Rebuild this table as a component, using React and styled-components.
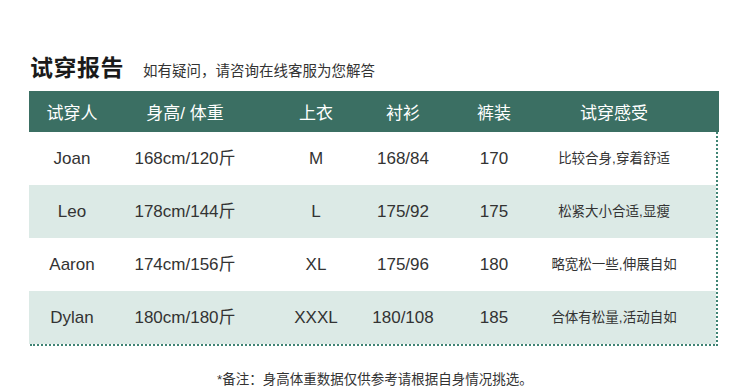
import React from 'react'
import styled, { createGlobalStyle } from 'styled-components'

const GlobalStyle = createGlobalStyle`
  body {
    margin: 0;
    background: #fff;
    font-family: 'Liberation Sans', Arial, 'Noto Sans CJK SC', sans-serif;
  }
`

const columns = ['试穿人', '身高/ 体重', '上衣', '衬衫', '裤装', '试穿感受']

const rows = [
  { name: 'Joan', body: '168cm/120斤', top: 'M', shirt: '168/84', pants: '170', feel: '比较合身,穿着舒适' },
  { name: 'Leo', body: '178cm/144斤', top: 'L', shirt: '175/92', pants: '175', feel: '松紧大小合适,显瘦' },
  { name: 'Aaron', body: '174cm/156斤', top: 'XL', shirt: '175/96', pants: '180', feel: '略宽松一些,伸展自如' },
  { name: 'Dylan', body: '180cm/180斤', top: 'XXXL', shirt: '180/108', pants: '185', feel: '合体有松量,活动自如' }
]

const App = () => {
  return (
    <Page>
      <GlobalStyle />
      <TitleRow>
        <Title>试穿报告</Title>
        <Subtitle>如有疑问，请咨询在线客服为您解答</Subtitle>
      </TitleRow>
      <Table>
        <HeaderRow>
          {columns.map(col => (
            <HeadCell key={col}>{col}</HeadCell>
          ))}
        </HeaderRow>
        <Body>
          {rows.map((row, i) => (
            <Row key={row.name} $tinted={i % 2 === 1}>
              <Cell>{row.name}</Cell>
              <Cell>{row.body}</Cell>
              <Cell>{row.top}</Cell>
              <Cell>{row.shirt}</Cell>
              <Cell>{row.pants}</Cell>
              <Cell $small>{row.feel}</Cell>
            </Row>
          ))}
        </Body>
      </Table>
      <Note>*备注：身高体重数据仅供参考请根据自身情况挑选。</Note>
    </Page>
  )
}

//Style-------------------------------------------------------------------------

const Page = styled.div`
  width: 750px;
  height: 388px;
  padding-top: 56px;
  box-sizing: border-box;
  overflow: hidden;
`

const TitleRow = styled.div`
  display: flex;
  align-items: flex-end;
  padding-left: 30px;
  height: 25px;
`

const Title = styled.h1`
  margin: 0;
  font-size: 23px;
  line-height: 25px;
  font-weight: bold;
  color: #1a1a1a;
  letter-spacing: 0.5px;
`

const Subtitle = styled.span`
  margin-left: 19px;
  font-size: 14.5px;
  line-height: 20px;
  color: #333;
`

const Table = styled.div`
  margin: 10px 0 0 29px;
  width: 690px;
`

const grid = `
  display: grid;
  grid-template-columns: 86px 140px 122px 52px 130px 110px;
`

const HeaderRow = styled.div`
  ${grid}
  height: 41px;
  background: #3b6f63;
  align-items: center;
`

const HeadCell = styled.div`
  display: flex;
  justify-content: center;
  white-space: nowrap;
  color: #fff;
  font-size: 17px;
`

const Body = styled.div`
  margin: 0 1px;
  border: 2px dotted #3f8474;
  border-top: none;
`

const Row = styled.div`
  ${grid}
  margin-left: -3px;
  height: 53px;
  padding-top: 1px;
  box-sizing: border-box;
  align-items: center;
  background: ${p => (p.$tinted ? '#dceae6' : '#fff')};
`

const Cell = styled.div`
  display: flex;
  justify-content: center;
  white-space: nowrap;
  line-height: 20px;
  color: #333;
  font-size: ${p => (p.$small ? '13.5px' : '17px')};
`

const Note = styled.p`
  margin: 25px 0 0;
  line-height: 18px;
  text-align: center;
  font-size: 13.5px;
  color: #333;
`

export default App
